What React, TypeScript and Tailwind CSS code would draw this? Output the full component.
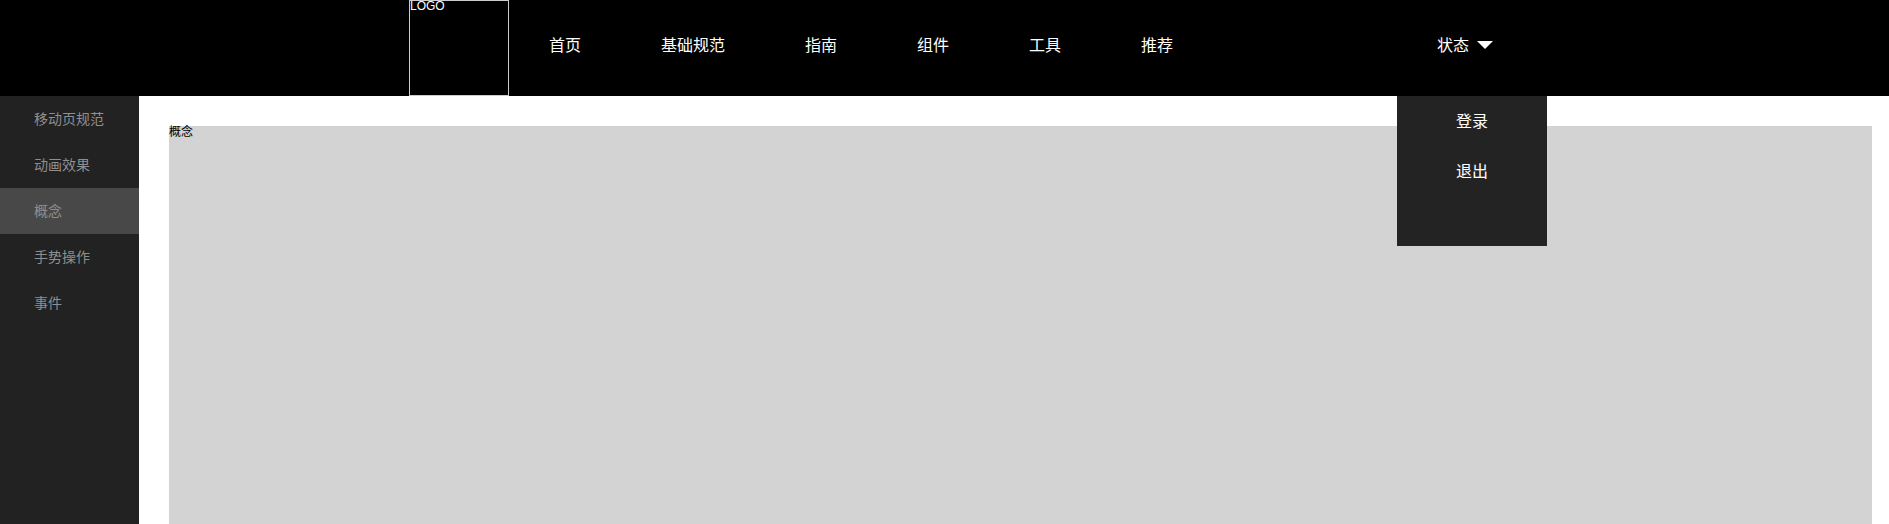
import React from "react";

const navItems = ["首页", "基础规范", "指南", "组件", "工具", "推荐"];
const sideItems = ["移动页规范", "动画效果", "概念", "手势操作", "事件"];

export default function App() {
  const cjk = { fontFamily: '"Noto Sans CJK SC", "Liberation Sans", sans-serif' };
  return (
    <div className="h-[524px] w-full overflow-hidden bg-white flex flex-col" style={cjk}>
      <header className="h-[96px] bg-black flex items-stretch pl-[409px] shrink-0">
        <div
          className="w-[100px] h-[96px] border border-[#cccccc] text-white text-[12px] leading-[10px]"
          style={{ fontFamily: '"Liberation Sans", Arial, sans-serif' }}
        >
          LOGO
        </div>
        <ul className="flex">
          {navItems.map((t) => (
            <li key={t} className="px-10 pt-[32px] text-[16px] leading-[24px] text-white">
              {t}
            </li>
          ))}
        </ul>
        <div className="relative ml-[184px] w-[150px] pl-10 pt-[32px] text-[16px] leading-[24px] text-white flex items-start">
          <span>状态</span>
          <span className="ml-2 mt-[9px] w-0 h-0 border-l-[8px] border-r-[8px] border-t-[8px] border-l-transparent border-r-transparent border-t-white" />
          <div className="absolute left-0 top-[96px] w-[150px] h-[150px] bg-[#232323] z-10">
            <div className="h-[50px] leading-[48px] text-center text-white">登录</div>
            <div className="h-[50px] leading-[48px] text-center text-white">退出</div>
          </div>
        </div>
      </header>
      <div className="flex flex-1 min-h-0">
        <aside className="w-[139px] bg-[#222222] shrink-0">
          {sideItems.map((t) => (
            <div
              key={t}
              className={`h-[46px] leading-[44px] pl-[34px] text-[14px] text-[#8f8f8f] ${t === "概念" ? "bg-[#484848]" : ""}`}
            >
              {t}
            </div>
          ))}
        </aside>
        <main className="flex-1 pl-[30px] pt-[30px] pr-[17px]">
          <div className="h-full bg-[#d3d3d3] text-black text-[12px] leading-[9px]">概念</div>
        </main>
      </div>
    </div>
  );
}
